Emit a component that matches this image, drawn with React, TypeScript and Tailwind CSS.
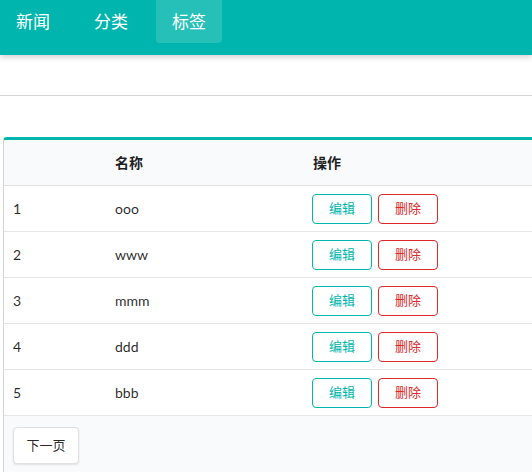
import React from "react";

const rows = [
  { id: 1, name: "ooo" },
  { id: 2, name: "www" },
  { id: 3, name: "mmm" },
  { id: 4, name: "ddd" },
  { id: 5, name: "bbb" },
];

const font = "font-['Lato','Noto_Sans_CJK_SC',sans-serif]";

export default function App() {
  return (
    <div className={`h-[472px] w-[532px] overflow-hidden bg-white text-[14px] text-black/85 ${font}`}>
      {/* top menu */}
      <div className="relative z-10 flex h-[55px] gap-3 bg-[#00b5ad] shadow-[0_2px_6px_rgba(0,0,0,0.2)]">
        {["新闻", "分类", "标签"].map((t, i) => (
          <div
            key={t}
            className={
              "flex h-[43px] w-[66px] items-center justify-center rounded-b-[4px] text-[17px] text-white " +
              (i === 2 ? "bg-white/15" : "")
            }
          >
            {t}
          </div>
        ))}
      </div>

      <div className="h-[40px]" />
      <div className="border-t border-[#d4d4d5]" />
      <div className="h-[41px]" />

      {/* table */}
      <div className="ml-[3px] w-[620px] overflow-hidden rounded-tl-[4px] border-l border-t-[3px] border-[#d4d4d5] border-t-[#00b5ad]">
        <div className="flex h-[46px] items-center border-b border-[#dedede] bg-[#f9fafb] font-bold text-black/90">
          <div className="w-[102px] pl-[9px]" />
          <div className="w-[198px] pl-[9px]">名称</div>
          <div className="pl-[9px]">操作</div>
        </div>
        {rows.map((r) => (
          <div key={r.id} className="flex h-[46px] items-center border-b border-[#e5e5e5]">
            <div className="w-[102px] pl-[9px]">{r.id}</div>
            <div className="w-[198px] pl-[9px]">{r.name}</div>
            <div className="flex gap-[6px] pl-[8px]">
              <button className="flex h-[30px] w-[60px] items-center justify-center rounded-[4px] border border-[#00b5ad] bg-white text-[13px] text-[#00b5ad]">
                编辑
              </button>
              <button className="flex h-[30px] w-[60px] items-center justify-center rounded-[4px] border border-[#db2828] bg-white text-[13px] text-[#db2828]">
                删除
              </button>
            </div>
          </div>
        ))}
        <div className="h-[80px] bg-[#f9fafb] pl-[9px] pt-[11px]">
          <button className="flex h-[37px] w-[66px] items-center justify-center rounded-[4px] border border-[#e0e0e0] bg-white text-[13px] text-black/85 shadow-[0_1px_2px_rgba(0,0,0,0.1)]">
            下一页
          </button>
        </div>
      </div>
    </div>
  );
}
